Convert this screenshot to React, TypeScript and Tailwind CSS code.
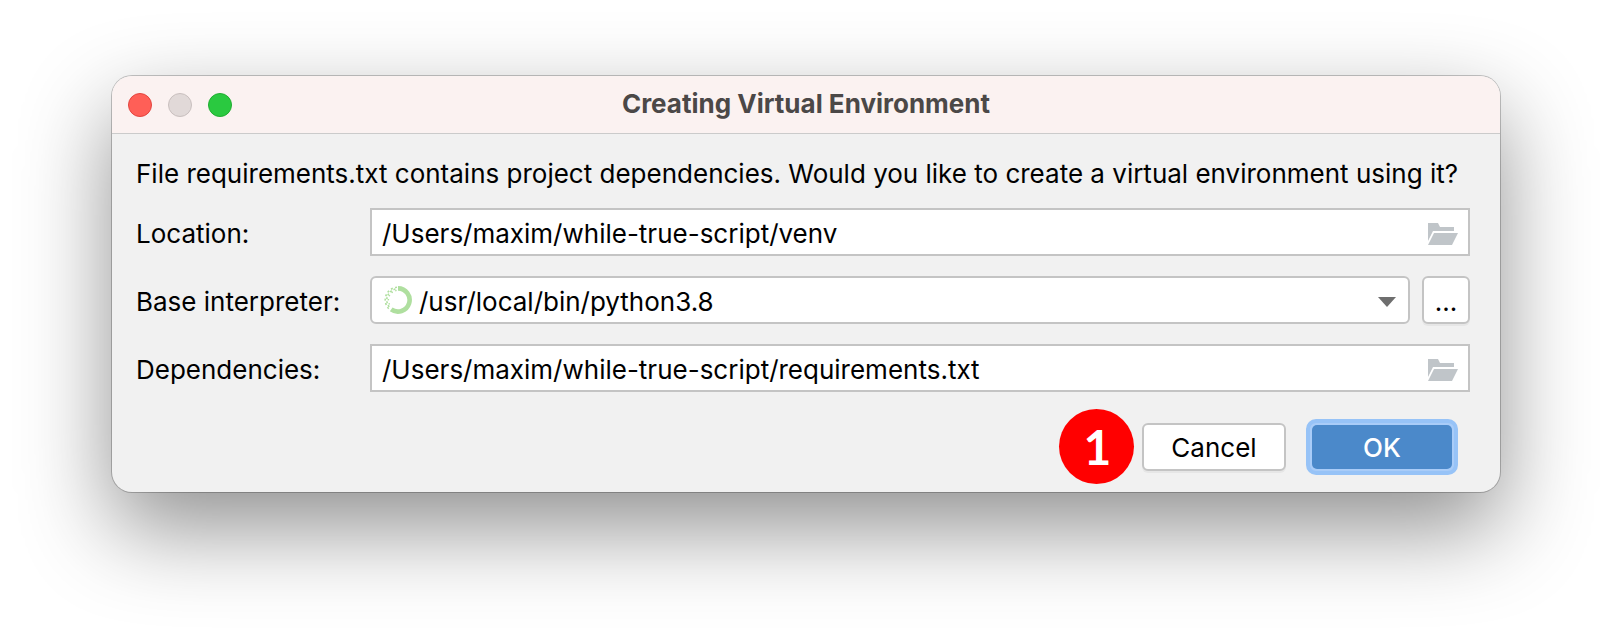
import { useState } from "react";

function FolderIcon() {
  return (
    <svg viewBox="0 0 30 22" className="h-[22px] w-[30px]" fill="#c0c5c9" aria-hidden="true">
      <path d="M0 0H10L12 4H26V8H5L0 18Z" />
      <path d="M6 10H30L24 22H0Z" />
    </svg>
  );
}

function LoaderIcon() {
  return (
    <svg viewBox="0 0 28 28" className="h-7 w-7" fill="none" stroke="#afdf9f" aria-hidden="true">
      <path d="M14 2.4A11.6 11.6 0 1 1 7.2 23.4" strokeWidth="4.6" />
      <path d="M13 1.2A12.8 12.8 0 0 0 5.4 23.4" strokeWidth="1.6" strokeDasharray="2 2.4" />
      <path d="M13.4 2.8A11.2 11.2 0 0 0 6.4 22.2" strokeWidth="1.6" strokeDasharray="2 2" strokeDashoffset="2" />
      <path d="M12.6 4.4A9.7 9.7 0 0 0 7 20.6" strokeWidth="1.4" strokeDasharray="1.4 2.8" />
    </svg>
  );
}

function PathField({ id, label, initial }: { id: string; label: string; initial: string }) {
  const [value, setValue] = useState(initial);
  return (
    <>
      <label htmlFor={id} className="pt-[3px]">{label}</label>
      <div className="flex h-12 items-center border-2 border-[#c4c4c4] bg-white px-2.5 pt-[3px]">
        <input
          id={id}
          type="text"
          value={value}
          onChange={(e) => setValue(e.target.value)}
          className="min-w-0 flex-1 bg-transparent outline-none"
        />
        <button type="button" aria-label={`Browse ${label}`} className="shrink-0">
          <FolderIcon />
        </button>
      </div>
    </>
  );
}

export default function App() {
  return (
    <main className="min-h-screen bg-white px-28 py-19 font-['Inter','Liberation_Sans',sans-serif] text-[26px] leading-8 text-black">
      <section
        aria-labelledby="dialog-title"
        className="overflow-hidden rounded-[20px] bg-[#f1f1f1] shadow-[0_0_0_1px_rgba(0,0,0,0.22),0_36px_90px_rgba(0,0,0,0.44)]"
      >
        <header className="grid h-[58px] grid-cols-[1fr_auto_1fr] items-center border-b border-[#cbcbcb] bg-[#fbf2f1] px-4">
          <div className="flex gap-4">
            <button type="button" aria-label="Close" className="size-6 rounded-full border border-[#e2453f] bg-[#ff5f57]" />
            <button type="button" aria-label="Minimize" className="size-6 rounded-full border border-[#c8bfbe] bg-[#e1d9d8]" />
            <button type="button" aria-label="Zoom" className="size-6 rounded-full border border-[#20ad31] bg-[#2ac940]" />
          </div>
          <h1 id="dialog-title" className="pb-0.5 text-[26px] font-bold text-[#4b4847]">
            Creating Virtual Environment
          </h1>
        </header>

        <form className="pt-6 pr-[30px] pb-2 pl-6" onSubmit={(e) => e.preventDefault()}>
          <p className="whitespace-nowrap">
            File requirements.txt contains project dependencies. Would you like to create a virtual environment using it?
          </p>

          <div className="mt-[18px] grid grid-cols-[214px_1fr] items-center gap-5">
            <PathField id="location" label="Location:" initial="/Users/maxim/while-true-script/venv" />

            <label htmlFor="interpreter" className="pt-[3px]">Base interpreter:</label>
            <div className="flex gap-3">
              <div className="relative flex-1">
                <select
                  id="interpreter"
                  className="h-12 w-full appearance-none rounded-md border-2 border-[#c4c4c4] bg-white pt-[3px] pr-12 pl-[47px] outline-none"
                >
                  <option>/usr/local/bin/python3.8</option>
                </select>
                <span className="pointer-events-none absolute inset-y-0 left-3.5 flex items-center">
                  <LoaderIcon />
                </span>
                <span className="pointer-events-none absolute inset-y-0 right-3.5 flex items-center pt-[3px]">
                  <svg viewBox="0 0 18 10" className="h-2.5 w-[18px]" fill="#6e6e6e" aria-hidden="true">
                    <path d="M0 0H18L9 10Z" />
                  </svg>
                </span>
              </div>
              <button
                type="button"
                aria-label="Choose interpreter"
                className="size-12 rounded-md border-2 border-[#c4c4c4] bg-white pt-[3px] shadow-[0_2px_0_#e6e6e6]"
              >
                ...
              </button>
            </div>

            <PathField id="dependencies" label="Dependencies:" initial="/Users/maxim/while-true-script/requirements.txt" />
          </div>

          <div className="mt-[17px] flex items-center justify-end pr-3">
            <span className="mr-2 flex size-[75px] items-center justify-center rounded-full bg-[#ff0000] pl-0.5 font-['Lato',sans-serif] text-5xl font-bold text-white">
              1
            </span>
            <button
              type="button"
              className="h-12 w-36 rounded-md border-2 border-[#c4c4c4] bg-white pt-0.5 shadow-[0_2px_0_#e6e6e6]"
            >
              Cancel
            </button>
            <button
              type="submit"
              className="ml-5 h-14 w-[152px] rounded-[10px] border-4 border-[#97c3f7] bg-[#a9ccf8] p-0.5 text-white"
            >
              <span className="flex h-full items-center justify-center rounded-[5px] bg-[#4b89ca] pt-0.5 font-medium">OK</span>
            </button>
          </div>
        </form>
      </section>
    </main>
  );
}
